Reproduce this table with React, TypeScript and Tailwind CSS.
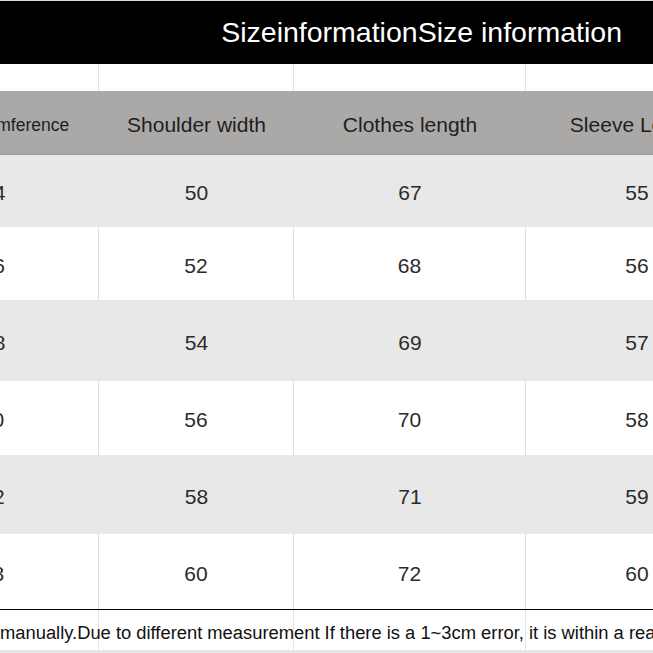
import React from "react";

const rows = [
  { c: "104", s: "50", l: "67", v: "55", grey: true, h: "h-[72px]" },
  { c: "106", s: "52", l: "68", v: "56", grey: false, h: "h-[73px]" },
  { c: "108", s: "54", l: "69", v: "57", grey: true, h: "h-[81px]" },
  { c: "110", s: "56", l: "70", v: "58", grey: false, h: "h-[74px]" },
  { c: "112", s: "58", l: "71", v: "59", grey: true, h: "h-[79px]" },
  { c: "118", s: "60", l: "72", v: "60", grey: false, h: "h-[75px]" },
];

const gridCols = "grid grid-cols-[222px_195px_232px_222px]";

export default function App() {
  return (
    <div
      className="w-[653px] h-[653px] overflow-hidden bg-white flex flex-col"
      style={{ fontFamily: '"Liberation Sans", Arial, sans-serif' }}
    >
      <div className="h-[1px] bg-[#dcdcdc] shrink-0" />
      <div className="h-[63px] bg-black flex items-center justify-end pr-[31px] shrink-0">
        <span className="text-white text-[28.5px] leading-none whitespace-nowrap">
          SizeinformationSize information
        </span>
      </div>

      <div className="ml-[-123px] w-[871px] flex flex-col shrink-0">
        <div className={`${gridCols} h-[27px] bg-white`}>
          <div className="border-r border-[#e2e2e2]" />
          <div className="border-r border-[#e2e2e2]" />
          <div className="border-r border-[#e2e2e2]" />
          <div />
        </div>

        <div className={`${gridCols} h-[64px] bg-[#aba9a8] border-b-2 border-[#a19f9e] text-[#1e1e1e] text-[21px]`}>
          <div className="flex items-center justify-center pl-[2px] pt-[6px] text-[17.5px] whitespace-nowrap">
            Chest circumference
          </div>
          <div className="flex items-center justify-center pt-[6px] whitespace-nowrap">Shoulder width</div>
          <div className="flex items-center justify-center pt-[6px] whitespace-nowrap">Clothes length</div>
          <div className="flex items-center justify-center pt-[6px] whitespace-nowrap">Sleeve Length</div>
        </div>

        {rows.map((r, i) => (
          <div
            key={i}
            className={`${gridCols} ${r.h} ${r.grey ? "bg-[#e8e8e8]" : "bg-white"} text-[21px] text-[#2b2b2b]`}
          >
            <div className={`flex items-center justify-center pt-[4px] ${r.grey ? "" : "border-r border-[#dedede]"}`}>{r.c}</div>
            <div className={`flex items-center justify-center pt-[4px] ${r.grey ? "" : "border-r border-[#dedede]"}`}>{r.s}</div>
            <div className={`flex items-center justify-center pt-[4px] ${r.grey ? "" : "border-r border-[#dedede]"}`}>{r.l}</div>
            <div className="flex items-center justify-center pt-[4px]">{r.v}</div>
          </div>
        ))}

        <div className="h-[1px] bg-black" />
        <div className={`${gridCols} h-[40px] bg-white relative`}>
          <div className="border-r border-[#e6e6e6]" />
          <div className="border-r border-[#e6e6e6]" />
          <div className="border-r border-[#e6e6e6]" />
          <div />
          <div className="absolute left-[123px] top-0 h-full pt-[6px] flex items-center whitespace-nowrap text-[18.35px] text-[#111]">
            manually.Due to different measurement If there is a 1~3cm error, it is within a reasonable range
          </div>
        </div>
      </div>
      <div className="flex-1 bg-[#e6e6e6]" />
    </div>
  );
}
